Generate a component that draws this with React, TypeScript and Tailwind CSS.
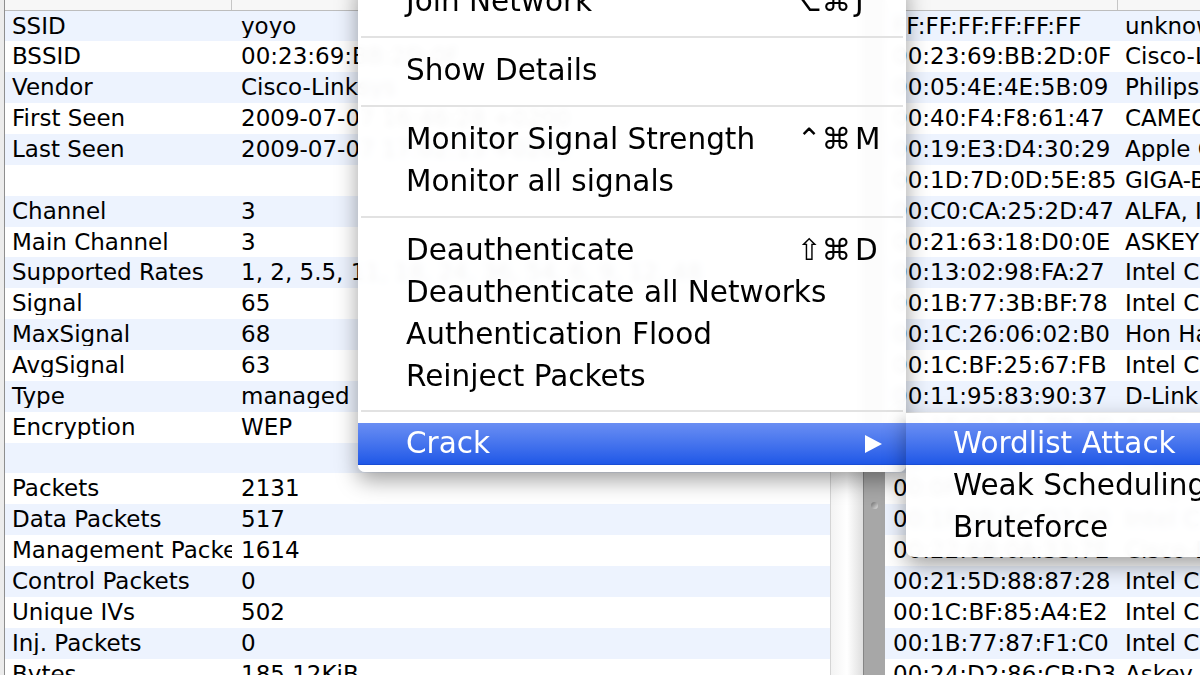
import React from "react";

const leftRows: [string, string][] = [
  ["SSID", "yoyo"],
  ["BSSID", "00:23:69:BB:2D:0F"],
  ["Vendor", "Cisco-Linksys"],
  ["First Seen", "2009-07-07 16:46:28 +0200"],
  ["Last Seen", "2009-07-07 17:02:13 +0200"],
  ["", ""],
  ["Channel", "3"],
  ["Main Channel", "3"],
  ["Supported Rates", "1, 2, 5.5, 11, 18, 24, 36, 54, 6, 9, 12, 48"],
  ["Signal", "65"],
  ["MaxSignal", "68"],
  ["AvgSignal", "63"],
  ["Type", "managed"],
  ["Encryption", "WEP"],
  ["", ""],
  ["Packets", "2131"],
  ["Data Packets", "517"],
  ["Management Packets", "1614"],
  ["Control Packets", "0"],
  ["Unique IVs", "502"],
  ["Inj. Packets", "0"],
  ["Bytes", "185.12KiB"],
];

const rightRows: [string, string][] = [
  ["FF:FF:FF:FF:FF:FF", "unknown"],
  ["00:23:69:BB:2D:0F", "Cisco-Linksys"],
  ["00:05:4E:4E:5B:09", "Philips Components"],
  ["00:40:F4:F8:61:47", "CAMEO Communications"],
  ["00:19:E3:D4:30:29", "Apple Computer"],
  ["00:1D:7D:0D:5E:85", "GIGA-BYTE Technology"],
  ["00:C0:CA:25:2D:47", "ALFA, Inc."],
  ["00:21:63:18:D0:0E", "ASKEY COMPUTER"],
  ["00:13:02:98:FA:27", "Intel Corporate"],
  ["00:1B:77:3B:BF:78", "Intel Corporate"],
  ["00:1C:26:06:02:B0", "Hon Hai Precision"],
  ["00:1C:BF:25:67:FB", "Intel Corporate"],
  ["00:11:95:83:90:37", "D-Link Corporation"],
  ["00:1E:C2:A1:7B:3D", "Apple Computer"],
  ["00:17:9A:5F:02:C4", "D-Link Corporation"],
  ["00:0F:B5:44:9E:21", "Netgear"],
  ["00:1F:3B:6C:D2:90", "Intel Corporate"],
  ["00:22:6B:0A:33:7E", "Cisco-Linksys"],
  ["00:21:5D:88:87:28", "Intel Corporate"],
  ["00:1C:BF:85:A4:E2", "Intel Corporate"],
  ["00:1B:77:87:F1:C0", "Intel Corporate"],
  ["00:24:D2:86:CB:D3", "Askey Computer"],
];

type MenuEntry =
  | { kind: "item"; label: string; mods?: string; keyChar?: string }
  | { kind: "sep"; tight?: boolean };

const menuEntries: MenuEntry[] = [
  { kind: "item", label: "Join Network", mods: "⌥⌘", keyChar: "J" },
  { kind: "sep" },
  { kind: "item", label: "Show Details" },
  { kind: "sep" },
  { kind: "item", label: "Monitor Signal Strength", mods: "⌃⌘", keyChar: "M" },
  { kind: "item", label: "Monitor all signals" },
  { kind: "sep" },
  { kind: "item", label: "Deauthenticate", mods: "⇧⌘", keyChar: "D" },
  { kind: "item", label: "Deauthenticate all Networks" },
  { kind: "item", label: "Authentication Flood" },
  { kind: "item", label: "Reinject Packets" },
  { kind: "sep", tight: true },
];

const stripe = (i: number) => (i % 2 === 0 ? "bg-[#edf3fe]" : "bg-white");

const DetailTable = () => (
  <div className="flex w-[826px] flex-col border-l border-[#8e8e8e]">
    <div className="flex h-[10.6px] shrink-0 border-b border-[#bdbdbd] bg-[#f7f7f7]">
      <div className="w-[227px] border-r border-[#c6c6c6]" />
      <div className="flex-1" />
    </div>
    {leftRows.map(([label, value], i) => (
      <div
        key={i}
        className={`flex h-[30.86px] shrink-0 items-center text-[23px] leading-none text-black ${stripe(i)}`}
      >
        <div className="w-[227px] shrink-0 overflow-hidden whitespace-nowrap pl-[7px]">
          {label}
        </div>
        <div className="flex-1 overflow-hidden whitespace-nowrap pl-[9px]">
          {value}
        </div>
      </div>
    ))}
  </div>
);

const StationTable = () => (
  <div className="flex flex-1 flex-col overflow-hidden">
    <div className="flex h-[10.6px] shrink-0 border-b border-[#bdbdbd] bg-[#f7f7f7]">
      <div className="w-[233px] border-r border-[#c6c6c6]" />
      <div className="flex-1" />
    </div>
    {rightRows.map(([mac, vendor], i) => (
      <div
        key={i}
        className={`flex h-[30.86px] shrink-0 items-center text-[23px] leading-none text-black ${stripe(i)}`}
      >
        <div className="w-[233px] shrink-0 overflow-hidden whitespace-nowrap pl-[8px]">
          {mac}
        </div>
        <div className="flex-1 overflow-hidden whitespace-nowrap pl-[7px]">
          {vendor}
        </div>
      </div>
    ))}
  </div>
);

const Splitter = () => (
  <div className="flex h-full w-[55px] shrink-0">
    <div className="w-[33px] border-l border-[#d4d4d4] bg-gradient-to-r from-[#f3f3f3] via-white to-[#dedede]" />
    <div className="flex w-[22px] flex-col items-center border-l border-[#858585] bg-[#a7a7a7] pt-[502px]">
      <div className="h-[7px] w-[7px] rounded-full bg-gradient-to-br from-[#6f6f6f] to-[#e2e2e2]" />
    </div>
  </div>
);

const Highlight = ({ label, arrow }: { label: string; arrow?: boolean }) => (
  <div className="flex h-[42px] items-center justify-between border-b border-[#1a4dd4] bg-gradient-to-b from-[#6a8ef3] to-[#1f57e7] pl-[48px] pr-[24px] text-white">
    <span>{label}</span>
    {arrow && (
      <svg width="17" height="18" viewBox="0 0 17 18">
        <polygon points="0,0 17,9 0,18" fill="white" />
      </svg>
    )}
  </div>
);

const ContextMenu = () => (
  <div className="absolute left-[358px] top-[-19px] w-[548px] rounded-b-[7px] bg-white/[0.965] pb-[7px] text-[29.5px] leading-none text-black shadow-[0_8px_22px_rgba(0,0,0,0.38)] backdrop-blur-[3px]">
    {menuEntries.map((entry, i) =>
      entry.kind === "sep" ? (
        <div
          key={i}
          className={`flex items-center px-[3px] ${entry.tight ? "h-[25px]" : "h-[27px]"}`}
        >
          <div className="h-[2px] w-full bg-[#e2e2e2]" />
        </div>
      ) : (
        <div
          key={i}
          className="flex h-[42px] items-center justify-between pl-[48px] pr-[23px] whitespace-nowrap"
        >
          <span>{entry.label}</span>
          {entry.mods && (
            <span className="flex">
              <span>{entry.mods}</span>
              <span className="ml-[4px] w-[28px]">{entry.keyChar}</span>
            </span>
          )}
        </div>
      )
    )}
    <Highlight label="Crack" arrow />
  </div>
);

const CrackSubmenu = () => (
  <div className="absolute left-[906px] top-[413px] w-[330px] rounded-bl-[8px] bg-white/[0.965] pb-[8px] pt-[10px] text-[29.5px] leading-none text-black shadow-[0_8px_22px_rgba(0,0,0,0.38)] backdrop-blur-[3px]">
    <div className="flex h-[42px] items-center border-b border-[#1a4dd4] bg-gradient-to-b from-[#6a8ef3] to-[#1f57e7] pl-[47px] whitespace-nowrap text-white">
      Wordlist Attack
    </div>
    <div className="flex h-[42px] items-center pl-[47px] whitespace-nowrap">
      Weak Scheduling
    </div>
    <div className="flex h-[42px] items-center pl-[47px] whitespace-nowrap">
      Bruteforce
    </div>
  </div>
);

export default function App() {
  return (
    <div className="relative h-[675px] w-[1200px] overflow-hidden bg-white font-['DejaVu_Sans',sans-serif]">
      <div className="flex h-full">
        <div className="w-[4px] shrink-0 bg-[#ececec]" />
        <DetailTable />
        <Splitter />
        <StationTable />
      </div>
      <ContextMenu />
      <CrackSubmenu />
    </div>
  );
}
